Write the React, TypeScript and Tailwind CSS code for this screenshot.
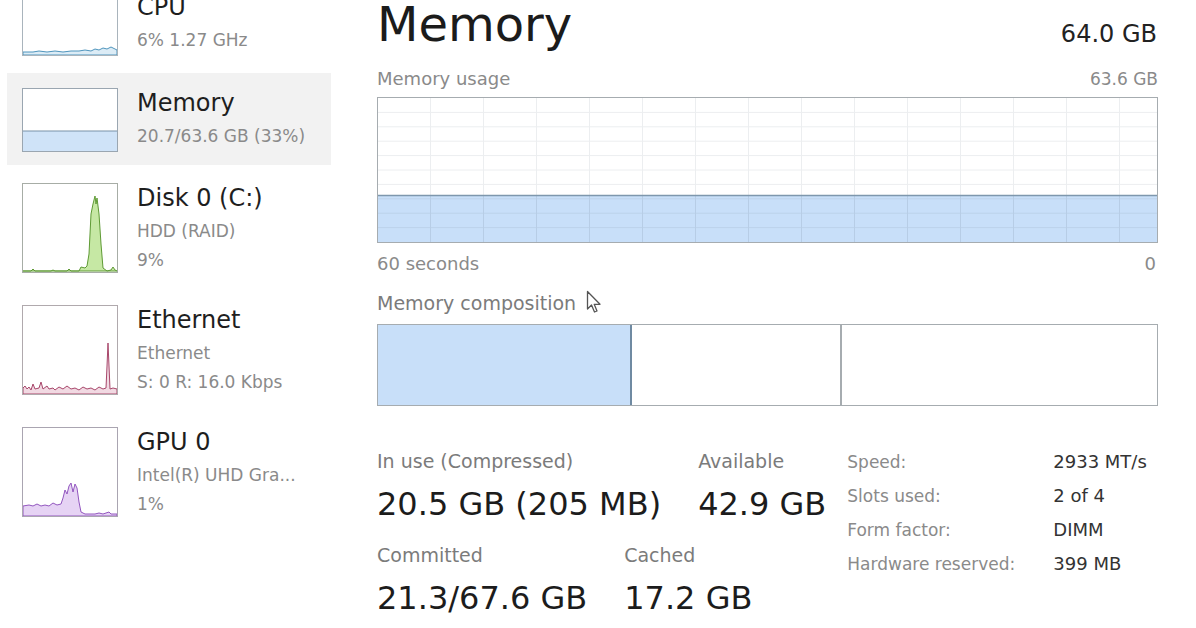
import React from 'react';

const font = { fontFamily: '"DejaVu Sans", "Liberation Sans", sans-serif' };

type ThumbProps = { h: number; border: string; children?: React.ReactNode };

const Thumb: React.FC<ThumbProps> = ({ h, border, children }) => (
  <div className={`w-[96px] shrink-0 border bg-white ${border}`} style={{ height: h }}>
    <svg className="block h-full w-full" viewBox={`0 0 94 ${h - 2}`} preserveAspectRatio="none">
      {children}
    </svg>
  </div>
);

type SideProps = {
  title: string;
  lines: string[];
  thumb: React.ReactNode;
  className?: string;
};

const SideItem: React.FC<SideProps> = ({ title, lines, thumb, className }) => (
  <div className={`flex pl-[15px] ${className ?? ''}`}>
    {thumb}
    <div className="ml-[19px] min-w-0">
      <div className="text-[24px] leading-[31px] text-[#1e1e1e] whitespace-nowrap">{title}</div>
      <div className="mt-[3px]">
        {lines.map((l) => (
          <div key={l} className="text-[17px] leading-[29px] text-[#8a8a8a] whitespace-nowrap">
            {l}
          </div>
        ))}
      </div>
    </div>
  </div>
);

const Sidebar: React.FC = () => (
  <div className="w-[331px] shrink-0 pl-[7px]">
    {/* CPU, cut off at the top */}
    <SideItem
      className="-mt-[8px] h-[81px]"
      title="CPU"
      lines={['6% 1.27 GHz']}
      thumb={
        <Thumb h={64} border="border-[#a9b4bc]">
          <path
            d="M0,62 L0,59 L10,59 L16,58 L24,59 L32,58 L40,59 L48,58 L56,58 L62,57 L68,58 L72,56 L76,57 L80,55 L84,56 L88,54 L92,56 L94,57 L94,62 Z"
            fill="#dcecf6"
            stroke="#4f95bd"
            strokeWidth="1"
          />
        </Thumb>
      }
    />
    {/* Memory, selected */}
    <SideItem
      className="h-[92px] pt-[15px] bg-[#f2f2f2]"
      title="Memory"
      lines={['20.7/63.6 GB (33%)']}
      thumb={
        <Thumb h={64} border="border-[#9aa6b1]">
          <rect x="0" y="42" width="94" height="20" fill="#cfe3f8" />
          <line x1="0" y1="42" x2="94" y2="42" stroke="#7891a8" strokeWidth="1.2" />
        </Thumb>
      }
    />
    <SideItem
      className="h-[122px] pt-[18px]"
      title="Disk 0 (C:)"
      lines={['HDD (RAID)', '9%']}
      thumb={
        <Thumb h={90} border="border-[#a7ada6]">
          <path
            d="M0,87 L8,87 L10,85 L12,87 L28,87 L30,86 L32,87 L44,87 L46,85 L48,87 L56,87 L58,83 L62,84 L64,82 L66,70 L68,30 L70,20 L72,12 L73,20 L74,14 L76,30 L78,60 L80,84 L84,87 L88,86 L90,83 L92,86 L94,87 Z"
            fill="#c6e8a4"
            stroke="#5e9a34"
            strokeWidth="1"
          />
        </Thumb>
      }
    />
    <SideItem
      className="h-[122px] pt-[18px]"
      title="Ethernet"
      lines={['Ethernet', 'S: 0 R: 16.0 Kbps']}
      thumb={
        <Thumb h={90} border="border-[#b0a9ad]">
          <path
            d="M0,88 L0,82 L2,80 L4,83 L6,81 L8,84 L10,78 L12,83 L16,82 L18,76 L20,83 L24,80 L26,83 L30,82 L32,84 L36,81 L40,83 L44,80 L48,83 L52,82 L56,84 L60,81 L64,83 L68,82 L72,84 L76,81 L80,83 L83,82 L84,60 L85,37 L86,60 L87,83 L90,82 L94,83 L94,88 Z"
            fill="#f1d9e2"
            stroke="#a8476b"
            strokeWidth="1"
          />
        </Thumb>
      }
    />
    <SideItem
      className="h-[122px] pt-[18px]"
      title="GPU 0"
      lines={['Intel(R) UHD Gra...', '1%']}
      thumb={
        <Thumb h={90} border="border-[#aaa5b1]">
          <path
            d="M0,88 L0,78 L6,77 L10,78 L14,76 L18,78 L22,77 L26,78 L30,75 L34,77 L38,76 L40,70 L42,62 L44,66 L46,58 L48,55 L50,64 L52,56 L54,60 L56,74 L58,84 L62,86 L72,86 L76,85 L80,86 L86,84 L88,86 L94,86 L94,88 Z"
            fill="#e6d3f4"
            stroke="#9256bf"
            strokeWidth="1"
          />
        </Thumb>
      }
    />
  </div>
);

const UsageGraph: React.FC = () => {
  const W = 779;
  const H = 144;
  const vx = Array.from({ length: 14 }, (_, i) => 52.5 + i * 53);
  const hy = Array.from({ length: 9 }, (_, i) => (i + 1) * 14.4);
  return (
    <div className="mt-[6px] h-[146px] border border-[#a6acb0] bg-white">
      <svg className="block" width={W} height={H} viewBox={`0 0 ${W} ${H}`}>
        {hy.map((y) => (
          <line key={`h${y}`} x1="0" x2={W} y1={y} y2={y} stroke="#eceef0" strokeWidth="1" />
        ))}
        {vx.map((x) => (
          <line key={`v${x}`} x1={x} x2={x} y1="0" y2={H} stroke="#eceef0" strokeWidth="1" />
        ))}
        <rect x="0" y="97" width={W} height={H - 97} fill="#c8dff9" />
        {hy
          .filter((y) => y > 98)
          .map((y) => (
            <line key={`fh${y}`} x1="0" x2={W} y1={y} y2={y} stroke="#bcd2ea" strokeWidth="1" />
          ))}
        {vx.map((x) => (
          <line key={`fv${x}`} x1={x} x2={x} y1="98" y2={H} stroke="#b7cde6" strokeWidth="1" />
        ))}
        <line x1="0" x2={W} y1="97.5" y2="97.5" stroke="#7e97ad" strokeWidth="1.5" />
      </svg>
    </div>
  );
};

const Cursor: React.FC = () => (
  <svg className="absolute left-[209px] top-[-1px]" width="17" height="24" viewBox="0 0 17 24">
    <path
      d="M1.5,1.5 L1.5,19 L5.5,15 L8.5,22 L11,21 L8.2,14.3 L14,14.3 Z"
      fill="#ffffff"
      stroke="#555"
      strokeWidth="1.3"
      strokeLinejoin="round"
    />
  </svg>
);

const Stat: React.FC<{ label: string; value: string; className?: string }> = ({ label, value, className }) => (
  <div className={className}>
    <div className="text-[19px] leading-[24px] text-[#7b7b7b] whitespace-nowrap">{label}</div>
    <div className="mt-[12px] text-[32px] leading-[38px] text-[#1c1c1c] whitespace-nowrap">{value}</div>
  </div>
);

const specs: [string, string][] = [
  ['Speed:', '2933 MT/s'],
  ['Slots used:', '2 of 4'],
  ['Form factor:', 'DIMM'],
  ['Hardware reserved:', '399 MB'],
];

const Main: React.FC = () => (
  <div className="ml-[46px] w-[781px] shrink-0">
    <div className="flex items-end justify-between">
      <div className="text-[48px] leading-[48px] text-[#1b1b1b]">Memory</div>
      <div className="text-[24px] leading-[28px] text-[#222] pr-[1px]">64.0 GB</div>
    </div>

    <div className="mt-[19px] flex justify-between text-[18px] leading-[24px] text-[#8a8a8a]">
      <span>Memory usage</span>
      <span className="text-[17px]">63.6 GB</span>
    </div>
    <UsageGraph />

    <div className="mt-[9px] flex justify-between text-[18px] leading-[24px] text-[#8a8a8a]">
      <span>60 seconds</span>
      <span className="pr-[2px]">0</span>
    </div>

    <div className="relative mt-[15px] text-[19px] leading-[24px] text-[#7b7b7b]">
      Memory composition
      <Cursor />
    </div>
    <div className="mt-[9px] flex h-[82px] border border-[#a6acb0] bg-white">
      <div className="w-[254px] bg-[#c8dff9] border-r-2 border-[#6f8aa2]" />
      <div className="w-[210px] border-r-2 border-[#a6acb0]" />
      <div className="flex-1" />
    </div>

    <div className="mt-[39px] flex items-start gap-[21px]">
      <div className="pt-[4px]">
        <div className="flex gap-[37px]">
          <Stat label="In use (Compressed)" value="20.5 GB (205 MB)" />
          <Stat label="Available" value="42.9 GB" />
        </div>
        <div className="mt-[20px] flex gap-[37px]">
          <Stat label="Committed" value="21.3/67.6 GB" />
          <Stat label="Cached" value="17.2 GB" />
        </div>
      </div>
      <div className="grid grid-cols-[206px_auto] content-start">
        {specs.map(([k, v]) => (
          <React.Fragment key={k}>
            <div className="text-[17px] leading-[34px] text-[#8a8a8a] whitespace-nowrap">{k}</div>
            <div className="text-[18px] leading-[34px] text-[#333] whitespace-nowrap">{v}</div>
          </React.Fragment>
        ))}
      </div>
    </div>
  </div>
);

export default function App() {
  return (
    <div className="flex h-[628px] w-[1196px] overflow-hidden bg-white" style={font}>
      <Sidebar />
      <Main />
    </div>
  );
}
